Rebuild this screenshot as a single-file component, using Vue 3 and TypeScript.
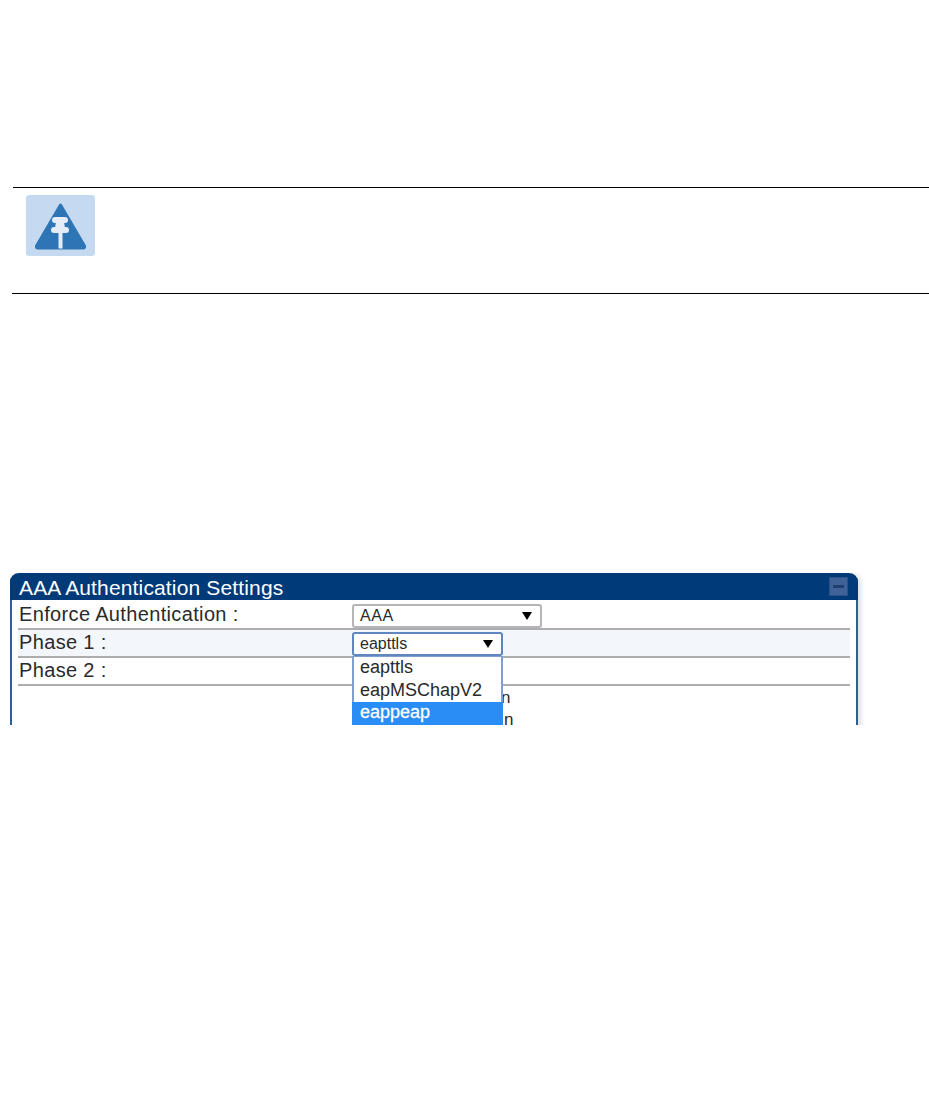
<script setup lang="ts">
interface Row {
  label: string
  shaded?: boolean
}

const rows: Row[] = [
  { label: 'Enforce Authentication :' },
  { label: 'Phase 1 :', shaded: true },
  { label: 'Phase 2 :' }
]

const options = ['eapttls', 'eapMSChapV2', 'eappeap']
</script>

<template>
  <div class="page">
    <div class="rule rule-top"></div>
    <div class="note">
      <svg class="note-icon" width="69" height="61" viewBox="0 0 69 61">
        <rect width="69" height="61" rx="3" fill="#c5d9f0" />
        <path d="M34.500 10 L58.500 51 Q59 53 57 53 L12 53 Q10 53 10.500 51 Z" fill="#2e75b6" stroke="#2e75b6" stroke-width="3" stroke-linejoin="round" />
        <rect x="26" y="22" width="16" height="6" rx="3" fill="#e4edf7" />
        <path d="M30 27 L38 27 L39 33 L29 33 Z" fill="#e4edf7" />
        <rect x="25" y="32" width="18" height="6" rx="3" fill="#e4edf7" />
        <rect x="32.500" y="37" width="4" height="16.500" fill="#e4edf7" />
      </svg>
    </div>
    <div class="rule rule-bottom"></div>

    <div class="shot">
      <div class="panel">
        <div class="panel-head">
          <span>AAA Authentication Settings</span>
          <span class="collapse"><i></i></span>
        </div>
        <div class="rows">
          <div v-for="row in rows" :key="row.label" class="row" :class="{ shaded: row.shaded }">
            {{ row.label }}
          </div>
        </div>

        <div class="select select-aaa">
          <span>AAA</span>
          <b class="arrow"></b>
        </div>
        <div class="select select-phase">
          <span>eapttls</span>
          <b class="arrow"></b>
        </div>

        <div class="behind">
          <span>n</span>
          <span class="second">n</span>
        </div>

        <ul class="dropdown">
          <li v-for="opt in options" :key="opt" :class="{ active: opt === 'eappeap' }">{{ opt }}</li>
        </ul>
      </div>
    </div>
  </div>
</template>

<style>
html,
body {
  background: #fff;
}
</style>

<style scoped>
.page {
  width: 929px;
  height: 1101px;
  padding-top: 187px;
  box-sizing: border-box;
  overflow: hidden;
  font-family: "Liberation Sans", Arial, sans-serif;
}

.rule {
  height: 1px;
  background: #000;
}

.rule-top {
  margin-left: 13px;
}

.rule-bottom {
  margin-left: 12px;
}

.note {
  height: 105px;
  padding: 7px 0 0 26px;
  box-sizing: border-box;
}

.note-icon {
  display: block;
}

.shot {
  margin-top: 279px;
  margin-left: 10px;
  width: 860px;
  height: 152px;
  overflow: hidden;
}

.panel {
  position: relative;
  width: 848px;
  height: 200px;
  box-sizing: border-box;
  border: 2px solid #2f5f93;
  border-top: 0;
  border-radius: 9px 9px 0 0;
  box-shadow: 2px 0 6px rgba(0, 0, 0, 0.16);
  background: #fff;
}

.panel-head {
  display: flex;
  align-items: center;
  justify-content: space-between;
  height: 27px;
  margin: 0 -2px;
  padding: 2px 10px 0 9px;
  box-sizing: border-box;
  background: #003a78;
  border-radius: 9px 9px 0 0;
  color: #fff;
  font-size: 21px;
  letter-spacing: 0.15px;
}

.collapse {
  display: flex;
  align-items: center;
  justify-content: center;
  width: 19px;
  height: 19px;
  margin-top: -2px;
  box-sizing: border-box;
  background: #3f6398;
  border: 1px solid #2b5288;
}

.collapse i {
  display: block;
  width: 11px;
  height: 3px;
  background: #1e3f70;
}

.rows {
  padding: 2px 6px 0;
}

.row {
  height: 28px;
  padding: 0 0 0 1px;
  box-sizing: border-box;
  border-bottom: 2px solid #adadad;
  color: #2a2a2a;
  font-size: 20px;
  letter-spacing: 0.35px;
  line-height: 24px;
}

.row.shaded {
  background: #f3f7fc;
}

.select {
  position: absolute;
  left: 340px;
  display: flex;
  align-items: center;
  justify-content: space-between;
  box-sizing: border-box;
  height: 24px;
  padding: 0 8px 0 6px;
  background: #fff;
  border: 2px solid #b5b5b5;
  border-radius: 3px;
  color: #2a2a2a;
  font-size: 16px;
}

.select-aaa {
  top: 31px;
  width: 190px;
  letter-spacing: 0.6px;
}

.select-phase {
  top: 59px;
  width: 151px;
  border-color: #5f86bd;
}

.arrow {
  width: 0;
  height: 0;
  border-left: 5px solid transparent;
  border-right: 5px solid transparent;
  border-top: 8px solid #000;
}

.behind {
  position: absolute;
  left: 489px;
  top: 114px;
  display: flex;
  flex-direction: column;
  color: #2a2a2a;
  font-size: 17px;
  line-height: 22px;
}

.behind .second {
  margin-left: 3px;
}

.dropdown {
  position: absolute;
  left: 340px;
  top: 83px;
  width: 151px;
  margin: 0;
  padding: 0;
  box-sizing: border-box;
  list-style: none;
  background: #fff;
  border: 2px solid #7f9fd0;
  border-top-width: 1px;
  color: #2a2a2a;
  font-size: 18px;
}

.dropdown li {
  height: 22.5px;
  padding-left: 6px;
  line-height: 20px;
}

.dropdown li.active {
  margin: 0 -2px;
  padding-left: 8px;
  height: 100px;
  background: #2a8cf5;
  color: #fff;
  -webkit-text-stroke: 0.3px #fff;
}
</style>
